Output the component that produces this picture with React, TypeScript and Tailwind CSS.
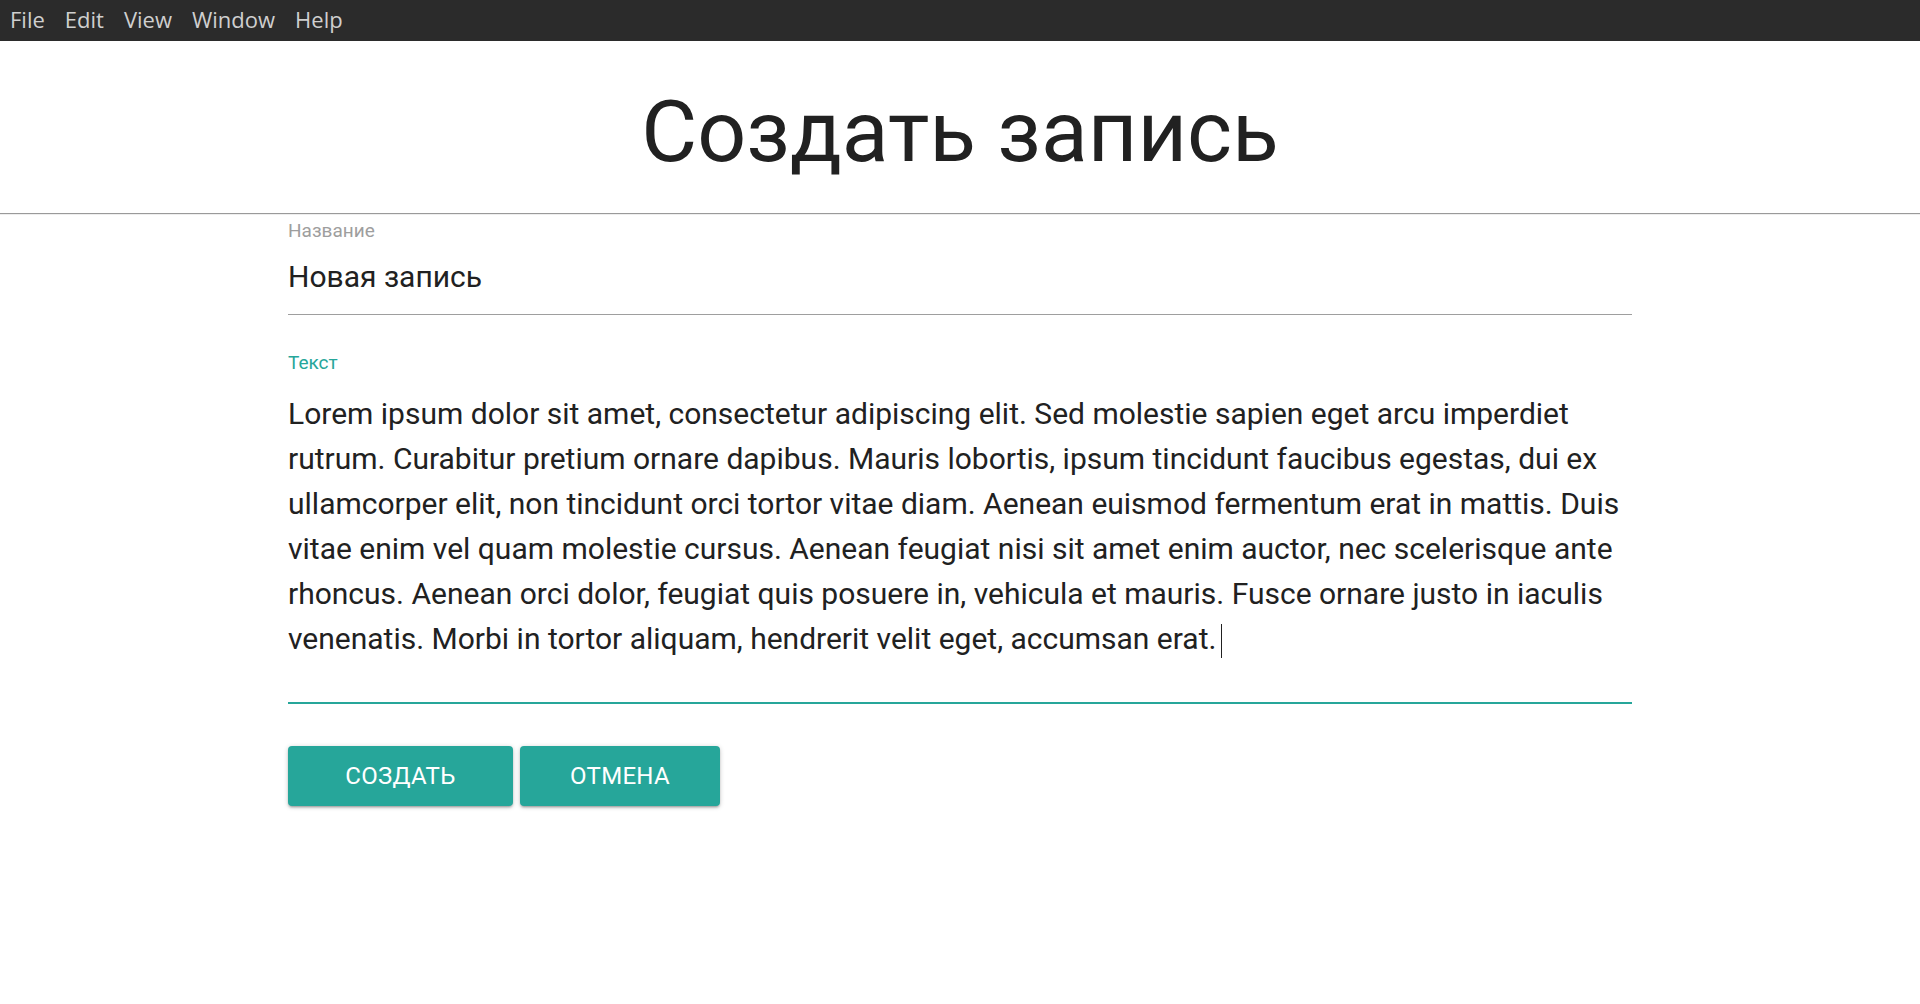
export default function App() {
  const menu = ["File", "Edit", "View", "Window", "Help"]

  return (
    <div className="min-h-[1004px] bg-white font-['Roboto',sans-serif] text-[#212121]">
      {/* menu bar */}
      <div className="flex h-[41px] items-center bg-[#2b2b2b] pb-[3px] font-['Open_Sans',sans-serif]">
        {menu.map((m) => (
          <span key={m} className="px-[10px] text-[22px] leading-none text-[#cfcfcf]">
            {m}
          </span>
        ))}
      </div>

      <h1 className="pt-[48px] pb-[38px] text-center text-[86px] leading-none font-normal text-[#212121]">
        Создать запись
      </h1>
      <div className="border-t border-b border-t-[#9a9a9a] border-b-[#eeeeee]" />

      <div className="mx-auto w-[1344px]">
        {/* title field */}
        <div className="mt-[5px]">
          <div className="text-[19px] leading-[22px] text-[#9e9e9e]">Название</div>
          <div className="mt-[17px] border-b border-[#9e9e9e] pb-[19px] text-[30px] leading-[36px] text-[#212121]">
            Новая запись
          </div>
        </div>

        {/* text field */}
        <div className="mt-[37px]">
          <div className="text-[19px] leading-[22px] text-[#26a69a]">Текст</div>
          <div className="mt-[17px] border-b-2 border-[#26a69a] pb-[41px] text-[30px] leading-[45px] text-[#212121]">
            Lorem ipsum dolor sit amet, consectetur adipiscing elit. Sed molestie sapien eget arcu imperdiet rutrum.
            Curabitur pretium ornare dapibus. Mauris lobortis, ipsum tincidunt faucibus egestas, dui ex ullamcorper elit,
            non tincidunt orci tortor vitae diam. Aenean euismod fermentum erat in mattis. Duis vitae enim vel quam
            molestie cursus. Aenean feugiat nisi sit amet enim auctor, nec scelerisque ante rhoncus. Aenean orci dolor,
            feugiat quis posuere in, vehicula et mauris. Fusce ornare justo in iaculis venenatis. Morbi in tortor aliquam,
            hendrerit velit eget, accumsan erat.
            <span className="ml-[5px] inline-block h-[34px] w-0 border-l border-[#212121] align-[-9px]" />
          </div>
        </div>

        {/* buttons */}
        <div className="mt-[42px] flex gap-[7px]">
          <button className="h-[60px] w-[225px] rounded-[4px] bg-[#26a69a] text-[24px] tracking-[0.3px] text-white uppercase shadow-[0_2px_2px_0_rgba(0,0,0,0.14),0_3px_1px_-2px_rgba(0,0,0,0.12),0_1px_5px_0_rgba(0,0,0,0.2)]">
            Создать
          </button>
          <button className="h-[60px] w-[200px] rounded-[4px] bg-[#26a69a] text-[24px] tracking-[0.3px] text-white uppercase shadow-[0_2px_2px_0_rgba(0,0,0,0.14),0_3px_1px_-2px_rgba(0,0,0,0.12),0_1px_5px_0_rgba(0,0,0,0.2)]">
            Отмена
          </button>
        </div>
      </div>
    </div>
  )
}
